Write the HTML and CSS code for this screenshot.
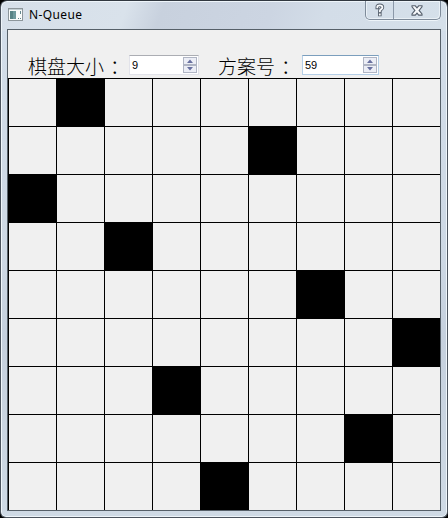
FILE: index.html
```html
<!DOCTYPE html>
<html lang="zh-CN">
<head>
<meta charset="utf-8">
<title>N-Queue</title>
<link rel="stylesheet" href="styles.css">
</head>
<body>
<div class="window">
  <header class="titlebar">
    <svg class="app-icon" width="15" height="13" viewBox="0 0 15 13">
      <rect x=".5" y=".5" width="14" height="12" fill="#fafcfb" stroke="#8d969b"/>
      <path d="M1 1.5h13" stroke="#c3cfd4"/>
      <rect x="2" y="3" width="6" height="8" fill="#6f9a9d"/>
      <rect x="2" y="3" width="3" height="8" fill="#588486"/>
      <path d="M12.5 3v3M10 10.5h1M12 10.5h1" stroke="#64878e"/>
    </svg>
    <h1 class="title">N-Queue</h1>
    <div class="controls">
      <button class="control help" aria-label="Help">
        <svg width="10" height="14" viewBox="0 0 10 14" fill="none" stroke-linecap="square">
          <path d="M2.3 4.4V4Q2.3 2.3 4.8 2.3T7.4 4.3Q7.4 5.6 6 6.4T4.8 8.2M4.8 11.3v.2" stroke="#555f6c" stroke-width="3.6"/>
          <path d="M2.3 4.4V4Q2.3 2.3 4.8 2.3T7.4 4.3Q7.4 5.6 6 6.4T4.8 8.2M4.8 11.3v.2" stroke="#f7f9fb" stroke-width="1.8"/>
        </svg>
      </button>
      <button class="control close" aria-label="Close">
        <svg width="12" height="11" viewBox="0 0 12 11">
          <path d="M1 .8h3.3L6 2.8l1.7-2H11v1.1L8.1 5.4 11 9v1.1H7.7L6 8.1l-1.7 2H1V9l2.9-3.6L1 1.9z" fill="#f7f9fb" stroke="#555f6c" stroke-width="1.1"/>
        </svg>
      </button>
    </div>
  </header>
  <main class="client">
    <div class="toolbar">
      <span class="label">棋盘大小<span class="colon">：</span></span>
      <div class="spin size">
        <span class="value">9</span>
        <span class="steps">
          <svg class="step" viewBox="0 0 12 6"><path d="M3 5l3-3.6L9 5z"/></svg>
          <svg class="step" viewBox="0 0 12 6"><path d="M3 1l3 3.6L9 1z"/></svg>
        </span>
      </div>
      <span class="label">方案号<span class="colon">：</span></span>
      <div class="spin plan">
        <span class="value">59</span>
        <span class="steps">
          <svg class="step" viewBox="0 0 12 6"><path d="M3 5l3-3.6L9 5z"/></svg>
          <svg class="step" viewBox="0 0 12 6"><path d="M3 1l3 3.6L9 1z"/></svg>
        </span>
      </div>
    </div>
    <div class="board" id="board"></div>
  </main>
</div>
<script src="board.js"></script>
</body>
</html>
```
FILE: styles.css
```css
* { box-sizing: border-box; }
body { margin: 0; background: #000; }
.window {
  width: 448px;
  height: 518px;
  padding: 0 6px 6px;
  border: 1px solid #4c545e;
  border-top-color: #313840;
  border-radius: 7px 7px 6px 6px;
  box-shadow: inset 0 0 0 1px #eef5fa;
  background:
    linear-gradient(110deg, #d6dfe9 0, #d9e2eb 28%, #c8d1de 36%, #ccd5e2 60%, #d3dde8 72%, #d5e0ea 100%) top / 100% 30px no-repeat,
    linear-gradient(180deg, #d3deea 0, #cdd8e4 50%, #c5d0dd 65%, #cfdae5 100%);
}
.titlebar {
  display: flex;
  align-items: flex-start;
  height: 28px;
  padding-left: 1px;
}
.app-icon { margin-top: 7px; flex: none; }
.title {
  margin: 6px 0 0 6px;
  font: 400 12px/16px "Noto Sans", "Open Sans", sans-serif;
  letter-spacing: .4px;
  color: #000;
}
.controls {
  display: flex;
  margin-left: auto;
  height: 19px;
  width: 76px;
  border: 1px solid #7e8b9a;
  border-top: 0;
  border-radius: 0 0 5px 5px;
  box-shadow: 0 1px 0 #edf4f9, inset 1px 0 #e9f0f6, inset -1px -1px #e9f0f6;
}
.control {
  display: flex;
  justify-content: center;
  padding: 2px 0 0;
  border: 0;
  background: none;
}
.help { width: 28px; border-right: 1px solid #8b98a8; }
.close { flex: 1; padding-top: 4px; }
.client {
  width: 434px;
  height: 482px;
  border: 1px solid #566069;
  background: #f0f0f0;
}
.toolbar {
  display: flex;
  align-items: flex-start;
  height: 48px;
  padding: 25px 0 0 20px;
}
.label {
  width: 101px;
  font: 300 19px/22px "Noto Sans CJK SC", sans-serif;
  color: #000;
  white-space: nowrap;
}
.colon { padding-left: 6px; }
.spin {
  display: flex;
  justify-content: space-between;
  height: 20px;
  padding: 1px 1px 1px 2px;
  border: 1px solid #e2e3ea;
  border-top-color: #abadb3;
  background: #fff;
}
.size { width: 70px; margin-right: 19px; }
.spin + .label { width: 84px; }
.plan { width: 77px; border-color: #b5cfe7; border-top-color: #7b9ebd; }
.value { font: 11px/16px "Liberation Sans", sans-serif; color: #000; }
.steps { display: flex; flex-direction: column; width: 14px; height: 16px; }
.step {
  width: 14px;
  height: 8px;
  border: 1px solid #b0b5c4;
  background: #eceef6;
  fill: #6870a0;
}
.board {
  display: grid;
  grid-template-columns: repeat(9, 48px);
  grid-template-rows: repeat(9, 48px);
  width: 432px;
  height: 432px;
  overflow: hidden;
}
.cell { border-top: 1px solid #000; border-left: 1px solid #000; }
.queen { background: #000; box-shadow: 1px 1px #000; }
```
FILE: board.js
```js
const queens = [1, 5, 0, 2, 6, 8, 3, 7, 4];
const board = document.getElementById("board");
queens.forEach((queen) => {
  for (let column = 0; column < queens.length; column++) {
    const cell = document.createElement("div");
    cell.className = column === queen ? "cell queen" : "cell";
    board.append(cell);
  }
});
```
